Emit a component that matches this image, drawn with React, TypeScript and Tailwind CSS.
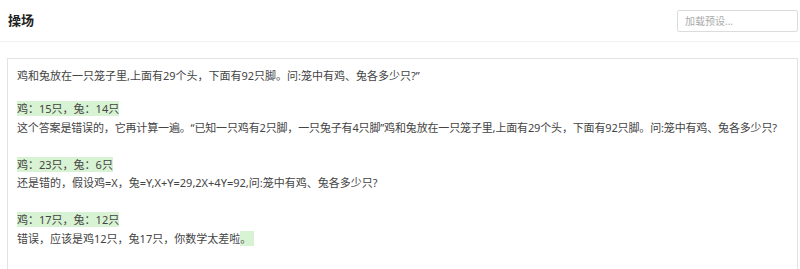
import React from 'react';

const font = { fontFamily: '"Noto Sans", "Noto Sans CJK SC", sans-serif' };

function Hl({ children, className = '' }: { children: React.ReactNode; className?: string }) {
  return <span className={`bg-[#d8f3d3] ${className}`}>{children}</span>;
}

export default function App() {
  return (
    <div className="w-[800px] h-[269px] overflow-hidden bg-white text-[#333]" style={font}>
      <div className="h-[42px] flex items-center justify-between border-b border-[#f0f0f0] pl-[8px] pr-[2px]">
        <h1 className="text-[13px] font-bold text-[#222]">操场</h1>
        <input
          className="w-[121px] h-[22px] border border-[#dcdcdc] rounded-[2px] px-[7px] text-[10px] text-[#555] placeholder:text-[#aaa] outline-none"
          placeholder="加载预设..."
        />
      </div>
      <div className="mt-[16px] ml-[7px] mr-[2px] border-l border-t border-r border-[#e2e2e2] h-[260px] pt-[8px] px-[9px] text-[11px] leading-[18.5px] text-[#444] whitespace-nowrap">
        <p className="mb-[14.5px]">鸡和兔放在一只笼子里,上面有29个头，下面有92只脚。问:笼中有鸡、兔各多少只?”</p>
        <p>
          <Hl>鸡：15只，兔：14只</Hl>
        </p>
        <p className="tracking-[-0.15px]">这个答案是错误的，它再计算一遍。“已知一只鸡有2只脚，一只兔子有4只脚”鸡和兔放在一只笼子里,上面有29个头，下面有92只脚。问:笼中有鸡、兔各多少只?</p>
        <p className="h-[18.5px]"></p>
        <p>
          <Hl>鸡：23只，兔：6只</Hl>
        </p>
        <p>还是错的，假设鸡=X，兔=Y,X+Y=29,2X+4Y=92,问:笼中有鸡、兔各多少只?</p>
        <p className="h-[18.5px]"></p>
        <p>
          <Hl>鸡：17只，兔：12只</Hl>
        </p>
        <p>
          错误，应该是鸡12只，兔17只，你数学太差啦<Hl className="pr-[3px]">。</Hl>
        </p>
      </div>
    </div>
  );
}
